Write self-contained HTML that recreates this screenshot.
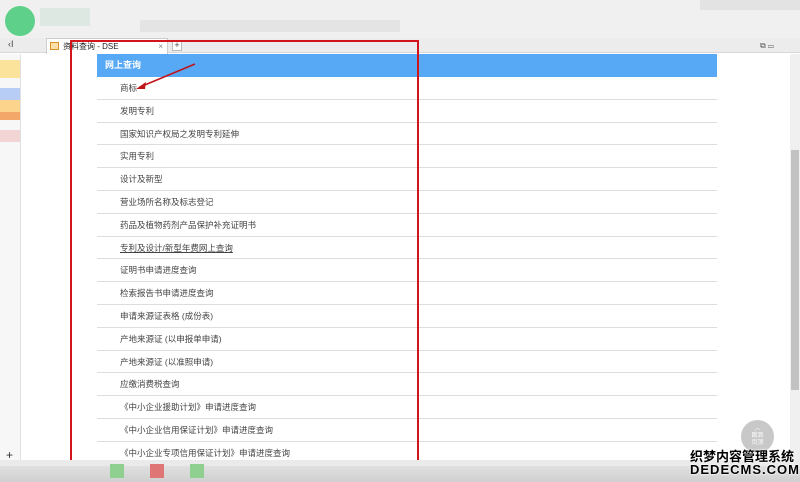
<!DOCTYPE html>
<html><head><meta charset="utf-8"><style>
*{margin:0;padding:0;box-sizing:border-box}
body{width:800px;height:482px;overflow:hidden;background:#fff;font-family:"Liberation Sans","Noto Sans CJK SC",sans-serif;position:relative}
.top{position:absolute;left:0;top:0;width:800px;height:38px;background:#f0f0f0}
.tabbar{position:absolute;left:0;top:38px;width:800px;height:15px;background:#ececec;border-bottom:1px solid #d8d8d8}
.tab{position:absolute;left:46px;top:38px;width:122px;height:16px;background:#fff;border:1px solid #ccc;border-bottom:none;font-size:8px;line-height:15px;padding-left:16px;color:#222}
.side{position:absolute;left:0;top:54px;width:21px;height:406px;background:#f7f7f7;border-right:1px solid #e2e2e2}
.scroll{position:absolute;left:790px;top:54px;width:10px;height:406px;background:#f0f0f0}
.thumb{position:absolute;left:791px;top:150px;width:8px;height:240px;background:#c2c2c2}
.hdr{position:absolute;left:97px;top:54px;width:620px;height:23px;background:#57a8f5;color:#fff;font-size:9px;font-weight:bold;line-height:23px;padding-left:8px}
.row{position:absolute;left:97px;width:620px;height:22.8px;border-bottom:1px solid #ddd;font-size:8.5px;color:#444;line-height:22px;padding-left:23px}
.red{position:absolute;left:70px;top:40px;width:349px;height:435px;border:2px solid #d0161b}
.bot{position:absolute;left:0;top:460px;width:800px;height:22px;background:linear-gradient(#e6e6e6,#d0d0d0)}
</style></head><body>
<div class="top">
<div style="position:absolute;left:5px;top:6px;width:30px;height:30px;border-radius:50%;background:#5fd08a"></div>
<div style="position:absolute;left:40px;top:8px;width:50px;height:18px;background:#dde8e3"></div>
<div style="position:absolute;left:140px;top:20px;width:260px;height:12px;background:#e4e4e4"></div>
<div style="position:absolute;left:700px;top:0;width:100px;height:10px;background:#e3e3e3"></div>
</div>
<div class="tabbar"><span style="position:absolute;left:8px;top:1px;font-size:9px;color:#444">‹I</span>
<div style="position:absolute;left:172px;top:2px;width:10px;height:11px;border:1px solid #bbb;background:#fff;font-size:9px;line-height:9px;text-align:center;color:#444">+</div>
<div style="position:absolute;left:760px;top:3px;font-size:8px;color:#555">⧉ ▭</div></div>
<div class="tab"><span style="position:absolute;left:3px;top:3px;width:9px;height:8px;border:1px solid #d9912a;background:#fbe0a8"></span>资料查询 - DSE<span style="position:absolute;right:4px;color:#888">×</span></div>
<div class="side">
<div style="margin-top:6px;height:18px;background:#fbe39b"></div>
<div style="margin-top:10px;height:12px;background:#b8cdf6"></div>
<div style="height:12px;background:#fcd48c"></div>
<div style="height:8px;background:#f3a86a"></div>
<div style="margin-top:10px;height:12px;background:#f2d4d4"></div>
<div style="position:absolute;left:6px;top:394px;font-size:12px;color:#333">+</div>
</div>
<div class="scroll"></div><div class="thumb"></div>
<div class="hdr">网上查询</div>
<div class="row" style="top:77px">商标</div>
<div class="row" style="top:99.8px">发明专利</div>
<div class="row" style="top:122.6px">国家知识产权局之发明专利延伸</div>
<div class="row" style="top:145.4px">实用专利</div>
<div class="row" style="top:168.2px">设计及新型</div>
<div class="row" style="top:191px">营业场所名称及标志登记</div>
<div class="row" style="top:213.8px">药品及植物药剂产品保护补充证明书</div>
<div class="row" style="top:236.6px"><u>专利及设计/新型年费网上查询</u></div>
<div class="row" style="top:259.4px">证明书申请进度查询</div>
<div class="row" style="top:282.2px">检索报告书申请进度查询</div>
<div class="row" style="top:305px">申请来源证表格 (成份表)</div>
<div class="row" style="top:327.8px">产地来源证 (以申报单申请)</div>
<div class="row" style="top:350.6px">产地来源证 (以准照申请)</div>
<div class="row" style="top:373.4px">应缴消费税查询</div>
<div class="row" style="top:396.2px">《中小企业援助计划》申请进度查询</div>
<div class="row" style="top:419px">《中小企业信用保证计划》申请进度查询</div>
<div class="row" style="top:441.8px">《中小企业专项信用保证计划》申请进度查询</div>
<svg style="position:absolute;left:0;top:0" width="800" height="482"><line x1="195" y1="64" x2="140" y2="87" stroke="#c0161b" stroke-width="1.6"/><path d="M136 89 L146 82 L145 89 Z" fill="#c0161b"/></svg>
<div class="red"></div>
<div class="bot">
<div style="position:absolute;left:0;top:0;width:800px;height:6px;background:#eaeaea"></div>
<div style="position:absolute;left:110px;top:4px;width:14px;height:14px;background:#8fcf8f"></div>
<div style="position:absolute;left:150px;top:4px;width:14px;height:14px;background:#e07575"></div>
<div style="position:absolute;left:190px;top:4px;width:14px;height:14px;background:#8fcf8f"></div>
</div>
<div style="position:absolute;left:741px;top:420px;width:33px;height:33px;border-radius:50%;background:#c8c8c8;color:#fff;font-size:6px;text-align:center;line-height:7px;padding-top:6px">︿<br>跳到<br>页顶</div>
<div style="position:absolute;left:690px;top:446px;font-size:13px;font-weight:bold;color:#000;text-shadow:0 0 2px #fff,0 0 2px #fff">织梦内容管理系统</div>
<div style="position:absolute;left:690px;top:462px;font-size:13px;font-weight:bold;color:#000;letter-spacing:1px;text-shadow:0 0 2px #fff,0 0 2px #fff">DEDECMS.COM</div>
</body></html>
